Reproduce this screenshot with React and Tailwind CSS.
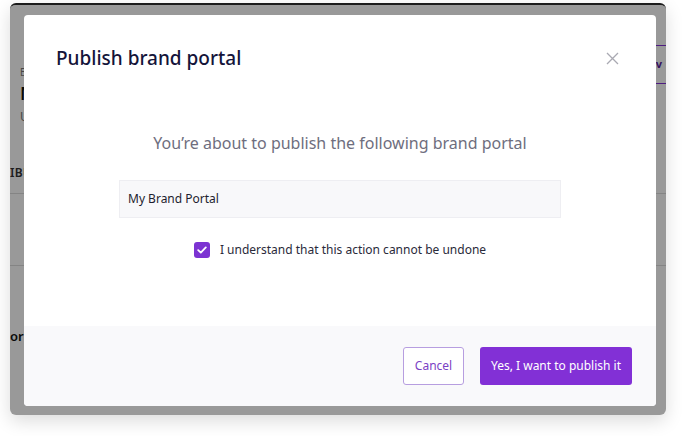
import React from "react";

export default function App() {
  const font = { fontFamily: '"Noto Sans", "Open Sans", sans-serif' };
  return (
    <div className="w-[688px] h-[436px] bg-white overflow-hidden pt-[3px] pl-[10px]" style={font}>
      <div className="relative w-[656px] h-[412px] rounded-[6px] bg-white border-t-2 border-[#1c1c1c] overflow-hidden shadow-[0_6px_18px_rgba(0,0,0,0.14)]">
        {/* underlying app (peeks out at edges) */}
        <div className="flex flex-col h-full">
          <div className="flex justify-end pt-[40px] h-[82px]">
            <div className="w-[40px] h-[39px] border-y border-[#8230d6] flex items-center justify-end pr-[4px] text-[#5a1fa0] text-[11px] font-bold">v</div>
          </div>
          <div className="pl-[10px] flex flex-col">
            <div className="text-[10px] text-[#777] leading-[14px] mt-[-22px]">E</div>
            <div className="text-[18px] font-semibold text-[#111] leading-[24px] mt-[2px]">M</div>
            <div className="text-[12px] text-[#777777] leading-[16px] mt-[4px]">U</div>
          </div>
          <div className="text-[12px] font-semibold text-[#333] leading-[16px] mt-[40px] tracking-wide">IBUTION</div>
          <div className="h-[1px] bg-[#ddd] mt-[12px]" />
          <div className="h-[71px]" />
          <div className="h-[1px] bg-[#ddd]" />
          <div className="text-[13px] font-semibold text-[#111] leading-[16px] mt-[62px]">or</div>
        </div>
        {/* overlay */}
        <div className="absolute inset-0 bg-black/40" />
        {/* modal */}
        <div className="absolute left-[14px] top-[10px] w-[632px] h-[391px] bg-white rounded-[4px] flex flex-col overflow-hidden">
          <div className="flex items-center justify-between pt-[29px] pl-[32px] pr-[37px]">
            <h2 className="text-[19px] leading-[28px] font-medium text-[#14143a]">Publish brand portal</h2>
            <svg width="13" height="13" viewBox="0 0 13 13" className="text-[#a9a9b2]">
              <path d="M1 1L12 12M12 1L1 12" stroke="currentColor" strokeWidth="1.3" fill="none" />
            </svg>
          </div>
          <p className="mt-[59px] text-center text-[16px] leading-[24px] text-[#6e6e7e]">
            You’re about to publish the following brand portal
          </p>
          <div className="mt-[25px] mx-auto w-[442px] h-[38px] bg-[#f8f8fa] border border-[#eeeef2] flex items-center pl-[8px] text-[12px] text-[#1e1e2e]">
            My Brand Portal
          </div>
          <div className="mt-[22px] flex items-center justify-center gap-[10px] h-[20px]">
            <div className="w-[16px] h-[16px] rounded-[3px] bg-[#7c33d2] flex items-center justify-center">
              <svg width="10" height="8" viewBox="0 0 10 8">
                <path d="M1.2 4.2L3.8 6.6L8.8 1.4" stroke="white" strokeWidth="1.8" fill="none" strokeLinecap="round" strokeLinejoin="round" />
              </svg>
            </div>
            <span className="text-[12px] text-[#2a2a3a]">I understand that this action cannot be undone</span>
          </div>
          <div className="mt-auto h-[80px] bg-[#f9f9fb] flex items-center justify-end gap-[16px] pr-[24px]">
            <button className="w-[61px] h-[38px] rounded-[3px] border border-[#b79ee0] bg-white text-[12px] text-[#7b3fc4]">Cancel</button>
            <button className="w-[152px] h-[38px] rounded-[3px] bg-[#8230d6] text-[12px] text-white">Yes, I want to publish it</button>
          </div>
        </div>
      </div>
    </div>
  );
}
